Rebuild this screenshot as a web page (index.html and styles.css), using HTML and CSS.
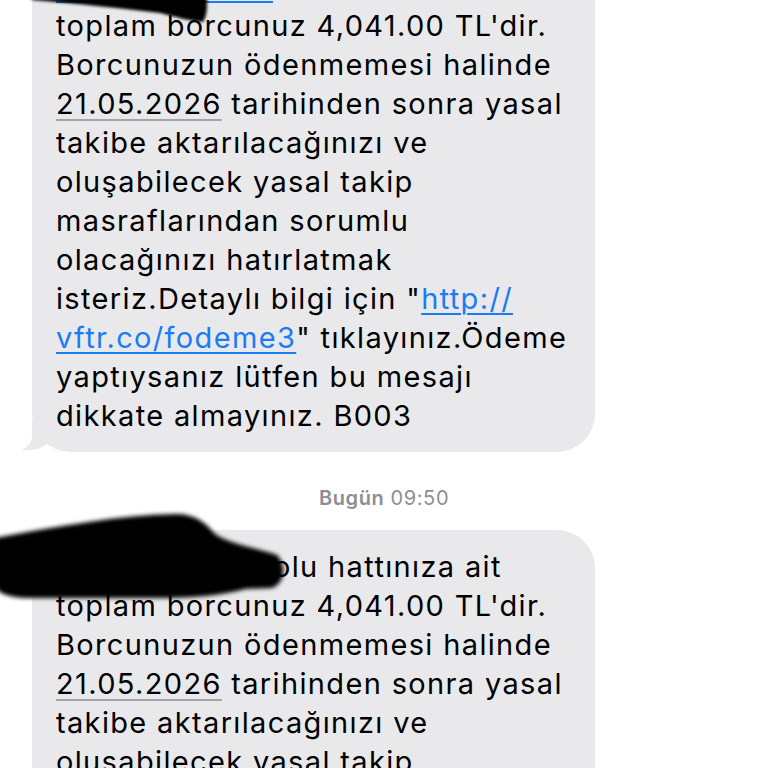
FILE: index.html
```html
<!DOCTYPE html>
<html lang="tr">
<head>
<meta charset="utf-8">
<link rel="stylesheet" href="styles.css">
</head>
<body>
<div class="thread">
  <div class="bubble first">
    <p class="msg"><span class="redacted"><a class="link">5XX XXX XXXX</a> n</span>olu hattınıza ait<br>toplam borcunuz 4,041.00 TL'dir.<br>Borcunuzun ödenmemesi halinde<br><span class="date">21.05.2026</span> tarihinden sonra yasal<br>takibe aktarılacağınızı ve<br>oluşabilecek yasal takip<br>masraflarından sorumlu<br>olacağınızı hatırlatmak<br>isteriz.Detaylı bilgi için "<a class="link">http://</a><br><a class="link">vftr.co/fodeme3</a>" tıklayınız.Ödeme<br>yaptıysanız lütfen bu mesajı<br>dikkate almayınız. B003</p>
    <span class="tail"></span>
  </div>
  <div class="stamp"><b>Bugün</b> 09:50</div>
  <div class="bubble second">
    <p class="msg"><span class="redacted"><a class="link">5XX XXX XXXX</a> n</span>olu hattınıza ait<br>toplam borcunuz 4,041.00 TL'dir.<br>Borcunuzun ödenmemesi halinde<br><span class="date">21.05.2026</span> tarihinden sonra yasal<br>takibe aktarılacağınızı ve<br>oluşabilecek yasal takip<br>masraflarından sorumlu</p>
  </div>
</div>
<svg class="scribble scribble-top" width="260" height="30" viewBox="0 0 260 30">
  <defs><filter id="soft1" x="-10%" y="-50%" width="120%" height="200%"><feGaussianBlur stdDeviation="1.6"/></filter></defs>
  <path d="M20,-10 L206,-10 C208,6 207,16 203,22 C190,21 176,17 160,13 C120,8 80,4 33,0 Z" fill="#050505" filter="url(#soft1)"/>
</svg>
<svg class="scribble scribble-bottom" width="300" height="110" viewBox="0 500 300 110">
  <defs><filter id="soft2" x="-10%" y="-20%" width="120%" height="140%"><feGaussianBlur stdDeviation="2"/></filter></defs>
  <path d="M-5,538 C60,526 120,515 175,514 C195,514 205,522 215,534 C232,545 258,548 277,555 C286,564 286,583 272,588 L245,589 C232,593 205,598 160,598 L30,598 C8,598 -5,592 -5,585 Z" fill="#050505" filter="url(#soft2)"/>
</svg>
</body>
</html>
```
FILE: styles.css
```css
html, body {
  margin: 0;
  padding: 0;
  background: #ffffff;
}
body {
  width: 768px;
  height: 768px;
  overflow: hidden;
  position: relative;
  font-family: Inter, "Noto Sans", "Liberation Sans", sans-serif;
}
.thread {
  display: flex;
  flex-direction: column;
  align-items: flex-start;
  padding-left: 32px;
}
.bubble {
  position: relative;
  width: 563px;
  box-sizing: border-box;
  background: #e9e9eb;
  border-radius: 38px;
  padding: 17px 0 17px 24px;
}
.bubble.first {
  margin-top: -50px;
}
.msg {
  margin: 0;
  font-size: 29px;
  line-height: 39px;
  color: #000;
  white-space: nowrap;
  letter-spacing: 1.35px;
}
.redacted {
  display: inline-block;
  width: 217px;
  overflow: hidden;
  vertical-align: bottom;
  white-space: nowrap;
}
.link {
  color: #1a7cf5;
  text-decoration: underline;
  text-decoration-thickness: 2px;
  text-underline-offset: 4px;
}
.date {
  text-decoration: underline;
  text-decoration-color: #a4a4a8;
  text-decoration-thickness: 2px;
  text-underline-offset: 5px;
}
.tail {
  position: absolute;
  left: -10px;
  bottom: 2px;
  width: 30px;
  height: 30px;
  background: #e9e9eb;
  border-bottom-right-radius: 22px 18px;
}
.tail::after {
  content: "";
  position: absolute;
  left: -20px;
  bottom: 0;
  width: 30px;
  height: 30px;
  background: #ffffff;
  border-bottom-right-radius: 14px 14px;
}
.stamp {
  align-self: stretch;
  margin: 35px 0 21px -32px;
  text-align: center;
  font-size: 20px;
  line-height: 22px;
  letter-spacing: 0.6px;
  color: #8e8e93;
}
.stamp b {
  font-weight: 600;
}
.scribble {
  position: absolute;
  left: 0;
  top: 0;
}
.scribble-bottom {
  top: 500px;
}
```
